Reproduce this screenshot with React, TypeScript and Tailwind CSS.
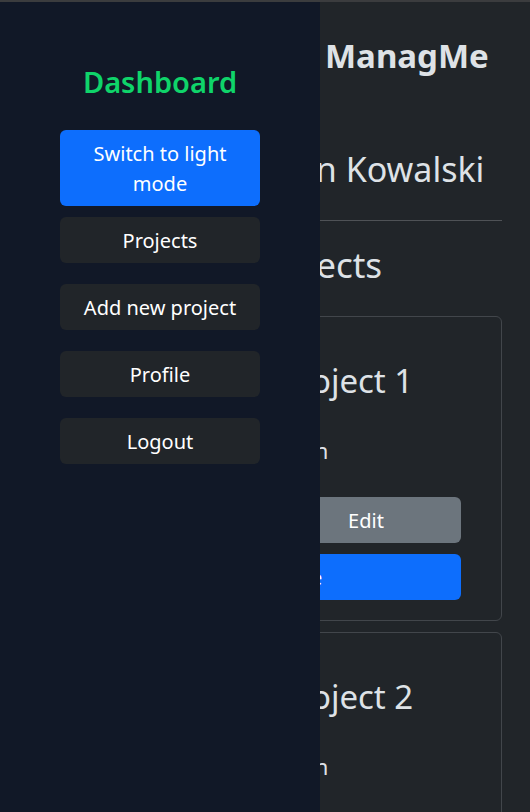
import React from "react";

function SideButton({ children, primary, className = "" }: { children: React.ReactNode; primary?: boolean; className?: string }) {
  return (
    <button
      className={
        "w-[200px] rounded-md px-4 pt-[9px] pb-[7px] text-[20px] leading-[30px] text-white " +
        (primary ? "bg-[#0d6efd] " : "bg-[#212529] ") +
        className
      }
    >
      {children}
    </button>
  );
}

function ProjectCard({ title, mt }: { title: string; mt: string }) {
  return (
    <div className={"rounded-md border border-[#42464b] pt-[44px] pb-[20px] " + mt}>
      <div className="flex flex-col items-start">
        <h2 className="ml-[249px] text-[33px] leading-[40px] font-normal text-[#dee2e6]">{title}</h2>
        <p className="ml-[181px] mt-[33px] text-[22px] leading-[33px] text-[#dee2e6]">Description</p>
        <div className="mt-[30px] flex w-full flex-col items-end gap-[11px] pr-[40px]">
          <button className="w-[190px] rounded-md bg-[#6c757d] pt-[9px] pb-[7px] text-[20px] leading-[30px] text-white">Edit</button>
          <button className="ml-[26px] w-[406px] self-start rounded-md bg-[#0d6efd] pt-[9px] pb-[7px] text-[20px] leading-[30px] text-white">
            Make it active
          </button>
        </div>
      </div>
    </div>
  );
}

export default function App() {
  return (
    <div className="relative h-[812px] w-[530px] overflow-hidden bg-[#212529] font-['Noto_Sans',sans-serif] text-[#dee2e6]">
      <div className="h-[2px] bg-[#3b3c3e]" />
      <header className="h-[113px] pt-[34px] pl-[325px]">
        <span className="text-[33px] leading-[39px] font-bold text-[#dee2e6]">ManagMe</span>
      </header>
      <main className="px-[28px]">
        <h1 className="ml-[159px] mt-[34px] text-[34px] leading-[41px] font-normal">Hello, Jan Kowalski</h1>
        <hr className="mt-[30px] border-t border-[#4f5256]" />
        <h2 className="ml-[223px] mt-[23px] text-[35px] leading-[42px] font-normal">Projects</h2>
        <div className="mt-[30px]">
          <ProjectCard title="Project 1" mt="" />
          <ProjectCard title="Project 2" mt="mt-[11px]" />
        </div>
      </main>

      <aside className="absolute left-0 top-[2px] bottom-0 w-[320px] bg-[#111827] flex flex-col items-center pt-[62px]">
        <h2 className="text-[29px] leading-[35px] font-semibold text-[#0fd46a]">Dashboard</h2>
        <SideButton primary className="mt-[31px]">Switch to light mode</SideButton>
        <SideButton className="mt-[11px]">Projects</SideButton>
        <SideButton className="mt-[21px]">Add new project</SideButton>
        <SideButton className="mt-[21px]">Profile</SideButton>
        <SideButton className="mt-[21px]">Logout</SideButton>
      </aside>
    </div>
  );
}
